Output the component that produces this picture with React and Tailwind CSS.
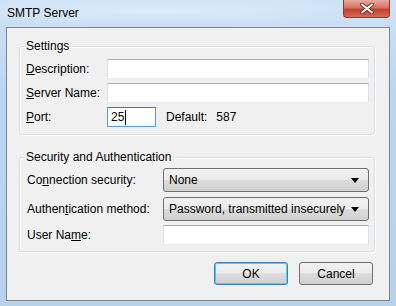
const font = { fontFamily: '"Liberation Sans", Arial, sans-serif' };

const TextBox = ({ className = '', focused, children }) => (
  <div
    className={`h-[20px] bg-white border flex items-center pl-[3px] text-[12px] ${
      focused
        ? 'border-[#5b9bd5] border-t-[#3d7bad]'
        : 'border-[#dbdfe6] border-t-[#abadb3] border-b-[#e3e9ef]'
    } ${className}`}
  >
    {children}
  </div>
);

const Combo = ({ value }) => (
  <div className="h-[24px] flex-1 rounded-[3px] border border-[#707070] bg-[linear-gradient(#f2f2f2_0%,#ebebeb_50%,#dddddd_50%,#cfcfcf_100%)] flex items-center justify-between pl-[5px] pr-[9px] text-[12px] text-black">
    <span>{value}</span>
    <svg width="8" height="5" viewBox="0 0 8 5">
      <path d="M0 0h8L4 5z" fill="#000" />
    </svg>
  </div>
);

const Group = ({ title, children, className = '' }) => (
  <fieldset className={`border border-[#d5dfe5] rounded-[3px] shadow-[inset_1px_1px_0_#fff,1px_1px_0_#fff] px-0 ${className}`}>
    <legend className="ml-[5px] px-[1px] text-[12px] leading-[15px] text-black">{title}</legend>
    {children}
  </fieldset>
);

const Button = ({ children, primary }) => (
  <button
    className={`w-[74px] h-[23px] rounded-[3px] border text-[12px] text-black bg-[linear-gradient(#f2f2f2_0%,#ebebeb_50%,#dddddd_50%,#cfcfcf_100%)] ${
      primary ? 'border-[#3c7fb1] shadow-[inset_0_0_0_1px_#48d2f8]' : 'border-[#707070]'
    }`}
  >
    {children}
  </button>
);

export default function App() {
  return (
    <div
      className="w-[396px] h-[306px] flex flex-col bg-[linear-gradient(180deg,#cfe2f6_0%,#bcd6f1_30%,#b9d1ea_100%)]"
      style={font}
    >
      <div className="h-[27px] flex items-start justify-between bg-[radial-gradient(ellipse_at_40%_40%,#dcebfa_0%,transparent_70%)]">
        <span className="pl-[7px] pt-[6px] text-[12px] leading-[15px] text-black">SMTP Server</span>
        <div className="mr-[6px] w-[47px] h-[18px] rounded-b-[4px] border border-t-0 border-[#8a3a33] bg-[linear-gradient(#e9a99f_0%,#d87563_45%,#c4412f_55%,#d46a56_100%)] flex items-center justify-center">
          <svg width="14" height="11" viewBox="0 0 14 11">
            <path d="M2 1.5l10 8M12 1.5l-10 8" stroke="#5b2a25" strokeWidth="3.6" strokeLinecap="round" />
            <path d="M2 1.5l10 8M12 1.5l-10 8" stroke="#fff" strokeWidth="2" strokeLinecap="round" />
          </svg>
        </div>
      </div>

      <div className="mx-[6px] mb-[5px] flex-1 border border-[#7b8590] bg-[#f0f0f0] pl-[12px] pr-[14px] pt-[11px] flex flex-col">
        <Group title="Settings" className="pb-[7px]">
          <div className="flex flex-col gap-[4px] pt-[5px] pl-[6px] pr-[5px] text-[12px] text-black">
            <div className="flex items-center">
              <span className="w-[81px]">
                <u>D</u>escription:
              </span>
              <TextBox className="flex-1" />
            </div>
            <div className="flex items-center">
              <span className="w-[81px]">
                <u>S</u>erver Name:
              </span>
              <TextBox className="flex-1" />
            </div>
            <div className="flex items-center">
              <span className="w-[81px]">
                <u>P</u>ort:
              </span>
              <TextBox className="w-[49px]" focused>
                <span>25</span>
                <span className="ml-[1px] w-[1px] h-[15px] bg-black" />
              </TextBox>
              <span className="ml-[10px]">Default:</span>
              <span className="ml-[9px]">587</span>
            </div>
          </div>
        </Group>

        <Group title="Security and Authentication" className="mt-[15px] pb-[6px]">
          <div className="flex flex-col gap-[1px] pt-[3px] pl-[7px] pr-[5px] text-[12px] text-black">
            <div className="flex items-center">
              <span className="w-[136px]">
                Co<u>n</u>nection security:
              </span>
              <Combo value="None" />
            </div>
            <div className="flex items-center mt-[4px]">
              <span className="w-[136px]">
                Authen<u>t</u>ication method:
              </span>
              <Combo value="Password, transmitted insecurely" />
            </div>
            <div className="flex items-center mt-[3px]">
              <span className="w-[136px]">
                User Na<u>m</u>e:
              </span>
              <TextBox className="flex-1" />
            </div>
          </div>
        </Group>

        <div className="flex justify-end gap-[11px] mt-[10px] pr-[2px]">
          <Button primary>OK</Button>
          <Button>Cancel</Button>
        </div>
      </div>
    </div>
  );
}
